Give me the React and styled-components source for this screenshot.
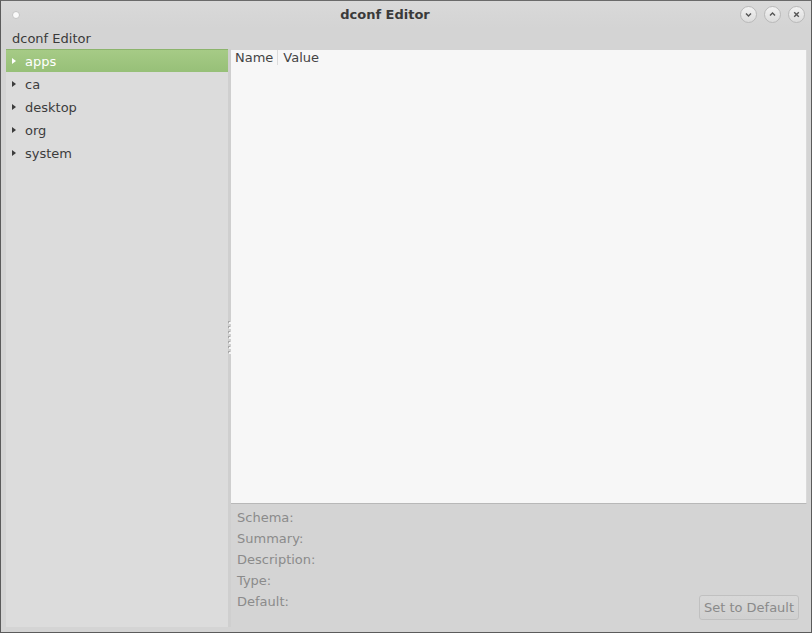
import React from "react";
import styled, { createGlobalStyle } from "styled-components";

const Global = createGlobalStyle`
  html, body { margin: 0; padding: 0; background: #d4d4d4; }
  body { font-family: "DejaVu Sans", sans-serif; font-size: 13px; color: #3c3c3c; }
  #root { width: 812px; height: 633px; }
`;

const Window = styled.div`
  box-sizing: border-box;
  width: 812px;
  height: 633px;
  border: 1px solid #5b5b5b;
  border-top-color: #6a6a6a;
  background: #d4d4d4;
  display: flex;
  flex-direction: column;
`;

const TitleBar = styled.div`
  height: 27px;
  flex: none;
  display: flex;
  align-items: center;
  position: relative;
  background: linear-gradient(#d9d9d9, #d4d4d4);
`;

const MenuDot = styled.span`
  width: 6px;
  height: 6px;
  border-radius: 50%;
  background: #fafafa;
  border: 1px solid #c4c4c4;
  margin-left: 11px;
`;

const Title = styled.div`
  position: absolute;
  left: 0;
  right: 42px;
  text-align: center;
  font-weight: bold;
  font-size: 13px;
  color: #3a3a3a;
  pointer-events: none;
`;

const Controls = styled.div`
  margin-left: auto;
  margin-right: 5px;
  display: flex;
  gap: 7px;
  padding-right: 1px;
`;

const CtlButton = styled.span`
  box-sizing: border-box;
  width: 17px;
  height: 17px;
  border-radius: 50%;
  border: 1px solid #b9b9b9;
  background: linear-gradient(#f2f2f2, #dcdcdc);
  display: flex;
  align-items: center;
  justify-content: center;
`;

const MenuBar = styled.div`
  height: 21px;
  flex: none;
  display: flex;
  align-items: center;
  padding-left: 11px;
  color: #3a3a3a;
`;

const Body = styled.div`
  flex: 1;
  display: flex;
  padding: 0 4px 5px 5px;
  min-height: 0;
`;

const Sidebar = styled.div`
  width: 222px;
  flex: none;
  background: #dcdcdc;
`;

const TreeRow = styled.div`
  height: 23px;
  display: flex;
  align-items: center;
  padding-left: 6px;
  color: ${(p) => (p.$selected ? "#ffffff" : "#3c3c3c")};
  background: ${(p) =>
    p.$selected ? "linear-gradient(#a6cb86, #97c078)" : "transparent"};
  border-top: 1px solid ${(p) => (p.$selected ? "#8cb46c" : "transparent")};
  box-sizing: border-box;
`;

const Arrow = styled.span`
  width: 0;
  height: 0;
  border-top: 3.5px solid transparent;
  border-bottom: 3.5px solid transparent;
  border-left: 4px solid ${(p) => (p.$selected ? "#ffffff" : "#3c3c3c")};
  margin-right: 9px;
`;

const Handle = styled.div`
  width: 3px;
  flex: none;
  background: #cfcfcf;
  display: flex;
  flex-direction: column;
  justify-content: center;
  align-items: center;
  gap: 3px;
`;

const Grip = styled.span`
  width: 2px;
  height: 2px;
  background: #f5f5f5;
  box-shadow: -1px -1px 0 #a9a9a9;
`;

const Right = styled.div`
  flex: 1;
  display: flex;
  flex-direction: column;
  min-width: 0;
`;

const ListView = styled.div`
  margin-top: 1px;
  height: 454px;
  flex: none;
  background: #f7f7f7;
  border-bottom: 1px solid #b8b8b8;
  border-right: 1px solid #dadada;
  box-sizing: border-box;
`;

const Header = styled.div`
  display: flex;
  height: 15px;
  align-items: center;
`;

const HeaderCell = styled.div`
  padding: 0 4px 0 ${(p) => (p.$sep ? 4 : 5)}px;
  color: #444;
  border-right: ${(p) => (p.$sep ? "1px solid #dcdcdc" : "none")};
  line-height: 15px;
`;

const Details = styled.div`
  flex: 1;
  position: relative;
  padding: 6px 0 0 6px;
  display: flex;
  flex-direction: column;
`;

const Label = styled.div`
  height: 21px;
  line-height: 16px;
  color: #8b8b8b;
`;

const ResetButton = styled.button`
  position: absolute;
  right: 8px;
  bottom: 7px;
  height: 25px;
  width: 100px;
  padding: 0;
  border: 1px solid #c0c0c0;
  border-radius: 3px;
  background: linear-gradient(#d8d8d8, #d0d0d0);
  color: #8a8a8a;
  font-family: "DejaVu Sans", sans-serif;
  font-size: 13px;
`;

const Chevron = ({ d }) => (
  <svg width="9" height="9" viewBox="0 0 9 9">
    <path d={d} fill="none" stroke="#555" strokeWidth="1.4" />
  </svg>
);

const folders = ["apps", "ca", "desktop", "org", "system"];
const labels = ["Schema:", "Summary:", "Description:", "Type:", "Default:"];

export default function App() {
  return (
    <>
      <Global />
      <Window>
        <TitleBar>
          <MenuDot />
          <Title>dconf Editor</Title>
          <Controls>
            <CtlButton>
              <Chevron d="M2 3.5 L4.5 6 L7 3.5" />
            </CtlButton>
            <CtlButton>
              <Chevron d="M2 5.5 L4.5 3 L7 5.5" />
            </CtlButton>
            <CtlButton>
              <Chevron d="M2.2 2.2 L6.8 6.8 M6.8 2.2 L2.2 6.8" />
            </CtlButton>
          </Controls>
        </TitleBar>
        <MenuBar>dconf Editor</MenuBar>
        <Body>
          <Sidebar>
            {folders.map((f, i) => (
              <TreeRow key={f} $selected={i === 0}>
                <Arrow $selected={i === 0} />
                {f}
              </TreeRow>
            ))}
          </Sidebar>
          <Handle>
            {Array.from({ length: 7 }).map((_, i) => (
              <Grip key={i} />
            ))}
          </Handle>
          <Right>
            <ListView>
              <Header>
                <HeaderCell $sep>Name</HeaderCell>
                <HeaderCell>Value</HeaderCell>
              </Header>
            </ListView>
            <Details>
              {labels.map((l) => (
                <Label key={l}>{l}</Label>
              ))}
              <ResetButton disabled>Set to Default</ResetButton>
            </Details>
          </Right>
        </Body>
      </Window>
    </>
  );
}
